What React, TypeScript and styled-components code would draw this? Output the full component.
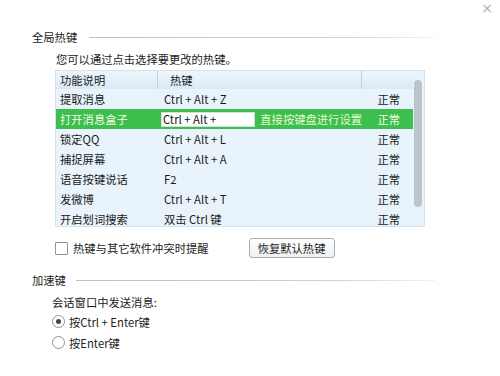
import React from "react";
import styled, { createGlobalStyle } from "styled-components";

const Global = createGlobalStyle`
  html, body { margin: 0; padding: 0; background: #fff; }
  body { font-family: "Noto Sans CJK SC", "Noto Sans", sans-serif; font-size: 11.3px; color: #222; }
`;

const Page = styled.div`
  position: relative;
  width: 500px;
  height: 376px;
  box-sizing: border-box;
  padding-top: 28px;
  display: flex;
  flex-direction: column;
  overflow: hidden;
`;

const Close = styled.div`
  position: absolute;
  right: 7px;
  top: 0px;
  font-size: 14px;
  color: #b0b0b0;
  font-family: "DejaVu Sans", sans-serif;
`;

const SectionHead = styled.div`
  display: flex;
  align-items: center;
  padding: 0 65px 0 32px;
  height: 18px;
  gap: ${(p: { gap: number }) => p.gap}px;
`;

const SectionTitle = styled.span`
  color: #222;
  line-height: 18px;
`;

const Rule = styled.div`
  flex: 1;
  height: 1px;
  background: linear-gradient(to right, #b8c2cc, #c9d1d9 70%, #f0f2f4);
`;

const Hint = styled.div`
  padding-left: 56px;
  margin-top: 5px;
  line-height: 16px;
  color: #222;
`;

const TableWrap = styled.div`
  position: relative;
  margin: 3px 0 0 55px;
  width: 370px;
  height: 157px;
  box-sizing: border-box;
  border: 1px solid #d6e2ec;
  background: #e9f3fb;
`;

const Row = styled.div<{ $head?: boolean; $sel?: boolean }>`
  display: grid;
  grid-template-columns: 102px 204px 51px;
  height: ${(p) => (p.$head ? 18 : 20)}px;
  align-items: center;
  width: 357px;
  background: ${(p) =>
    p.$head
      ? "linear-gradient(to bottom, #eef6fc, #dbe9f5)"
      : p.$sel
      ? "#3cbf4c"
      : "transparent"};
  color: ${(p) => (p.$sel ? "#f4fbe8" : "#1a1a1a")};
`;

const Cell = styled.div<{ $sep?: boolean; $right?: boolean; $pad?: number }>`
  height: 100%;
  display: flex;
  align-items: center;
  padding-left: ${(p) => p.$pad ?? 4}px;
  justify-content: ${(p) => (p.$right ? "flex-end" : "flex-start")};
  padding-right: ${(p) => (p.$right ? 13 : 0)}px;
  border-right: ${(p) => (p.$sep ? "1px solid #c2d0dc" : "none")};
  box-sizing: border-box;
  white-space: nowrap;
`;

const KeyInput = styled.div`
  width: 99px;
  height: 15px;
  box-sizing: border-box;
  background: #fff;
  border: 1px solid #cfe5cf;
  color: #111;
  padding-left: 1px;
  line-height: 13px;
`;

const SetHint = styled.span`
  margin-left: 5px;
  color: #e9f7cf;
`;

const Thumb = styled.div`
  position: absolute;
  right: 2px;
  top: 9px;
  width: 8px;
  height: 127px;
  border-radius: 4px;
  background: #bcc3c9;
`;

const OptionBar = styled.div`
  display: flex;
  align-items: center;
  margin: 11px 0 0 55px;
  height: 20px;
`;

const Check = styled.span`
  width: 11px;
  height: 11px;
  border: 1px solid #8d949b;
  border-radius: 1px;
  background: #fff;
  margin-right: 5px;
`;

const Label = styled.span`
  line-height: 16px;
`;

const Button = styled.div`
  margin-left: 40px;
  width: 86px;
  height: 20px;
  box-sizing: border-box;
  border: 1px solid #a9adb2;
  border-radius: 3px;
  background: linear-gradient(to bottom, #ffffff, #eef0f2);
  display: flex;
  align-items: center;
  justify-content: center;
  color: #222;
`;

const Section2 = styled.div`
  margin-top: 13px;
`;

const SubTitle = styled.div`
  padding-left: 52px;
  margin-top: 5px;
  line-height: 16px;
`;

const RadioRow = styled.div`
  display: flex;
  align-items: center;
  padding-left: 52px;
  height: 21px;
  margin-top: ${(p: { mt: number }) => p.mt}px;
`;

const Radio = styled.span<{ $on?: boolean }>`
  width: 11px;
  height: 11px;
  border: 1px solid #8d949b;
  border-radius: 50%;
  background: #fff;
  margin-right: 4px;
  display: flex;
  align-items: center;
  justify-content: center;
  &::after {
    content: "";
    display: ${(p) => (p.$on ? "block" : "none")};
    width: 5px;
    height: 5px;
    border-radius: 50%;
    background: #3a4756;
  }
`;

const rows = [
  ["提取消息", "Ctrl + Alt + Z"],
  ["打开消息盒子", ""],
  ["锁定QQ", "Ctrl + Alt + L"],
  ["捕捉屏幕", "Ctrl + Alt + A"],
  ["语音按键说话", "F2"],
  ["发微博", "Ctrl + Alt + T"],
  ["开启划词搜索", "双击 Ctrl 键"],
];

export default function App() {
  return (
    <Page>
      <Global />
      <Close>×</Close>
      <SectionHead gap={12}>
        <SectionTitle>全局热键</SectionTitle>
        <Rule />
      </SectionHead>
      <Hint>您可以通过点击选择要更改的热键。</Hint>
      <TableWrap>
        <Row $head>
          <Cell $sep>功能说明</Cell>
          <Cell $sep $pad={12}>热键</Cell>
          <Cell />
        </Row>
        {rows.map(([name, key], i) =>
          i === 1 ? (
            <Row key={name} $sel>
              <Cell>{name}</Cell>
              <Cell $pad={3}>
                <KeyInput>Ctrl + Alt +</KeyInput>
                <SetHint>直接按键盘进行设置</SetHint>
              </Cell>
              <Cell $right>正常</Cell>
            </Row>
          ) : (
            <Row key={name}>
              <Cell>{name}</Cell>
              <Cell $pad={6}>{key}</Cell>
              <Cell $right>正常</Cell>
            </Row>
          )
        )}
        <Thumb />
      </TableWrap>
      <OptionBar>
        <Check />
        <Label>热键与其它软件冲突时提醒</Label>
        <Button>恢复默认热键</Button>
      </OptionBar>
      <Section2>
        <SectionHead gap={10}>
          <SectionTitle>加速键</SectionTitle>
          <Rule />
        </SectionHead>
        <SubTitle>会话窗口中发送消息:</SubTitle>
        <RadioRow mt={1}>
          <Radio $on />
          <Label>按Ctrl + Enter键</Label>
        </RadioRow>
        <RadioRow mt={0}>
          <Radio />
          <Label>按Enter键</Label>
        </RadioRow>
      </Section2>
    </Page>
  );
}
